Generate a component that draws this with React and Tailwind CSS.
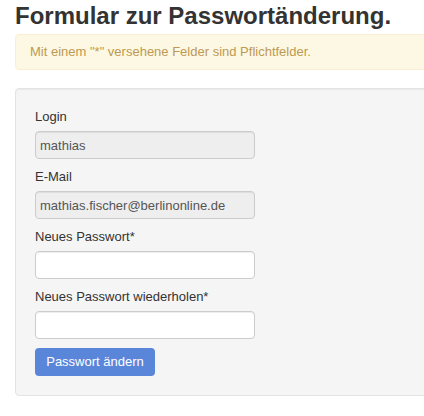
export default function App() {
  const fields = [
    { label: "Login", value: "mathias", disabled: true },
    { label: "E-Mail", value: "mathias.fischer@berlinonline.de", disabled: true },
    { label: "Neues Passwort*", value: "", disabled: false, type: "password" },
    { label: "Neues Passwort wiederholen*", value: "", disabled: false, type: "password" },
  ];

  return (
    <div className="w-full overflow-hidden bg-white font-['Liberation_Sans',Arial,sans-serif] text-[#333]">
      <div className="w-[940px] px-[15px]">
        <h1 className="mt-[3px] mb-[5px] text-[24px] font-bold leading-[26px] text-[#333]">
          Formular zur Passwortänderung.
        </h1>

        <div className="mb-[18px] rounded-[4px] border border-[#fbeed5] bg-[#fcf8e3] px-[14px] py-[7px] text-[13px] leading-[20px] text-[#c09853]">
          Mit einem "*" versehene Felder sind Pflichtfelder.
        </div>

        <form className="rounded-[4px] border border-[#e3e3e3] bg-[#f5f5f5] p-[19px] shadow-[inset_0_1px_1px_rgba(0,0,0,0.05)]">
          {fields.map((f) => (
            <div key={f.label} className="mb-[9px]">
              <label className="mb-[5px] block text-[13px] leading-[18px] text-[#333]">
                {f.label}
              </label>
              <input
                type={f.type || "text"}
                defaultValue={f.value}
                disabled={f.disabled}
                className={
                  "block h-[28px] w-[220px] rounded-[4px] border border-[#ccc] px-[4px] text-[13px] text-[#555] shadow-[inset_0_1px_1px_rgba(0,0,0,0.075)] outline-none " +
                  (f.disabled ? "bg-[#eee]" : "bg-white")
                }
              />
            </div>
          ))}

          <button
            type="button"
            className="h-[28px] w-[120px] rounded-[4px] bg-[#5a86da] text-[13px] text-white"
          >
            Passwort ändern
          </button>
        </form>
      </div>
    </div>
  );
}
